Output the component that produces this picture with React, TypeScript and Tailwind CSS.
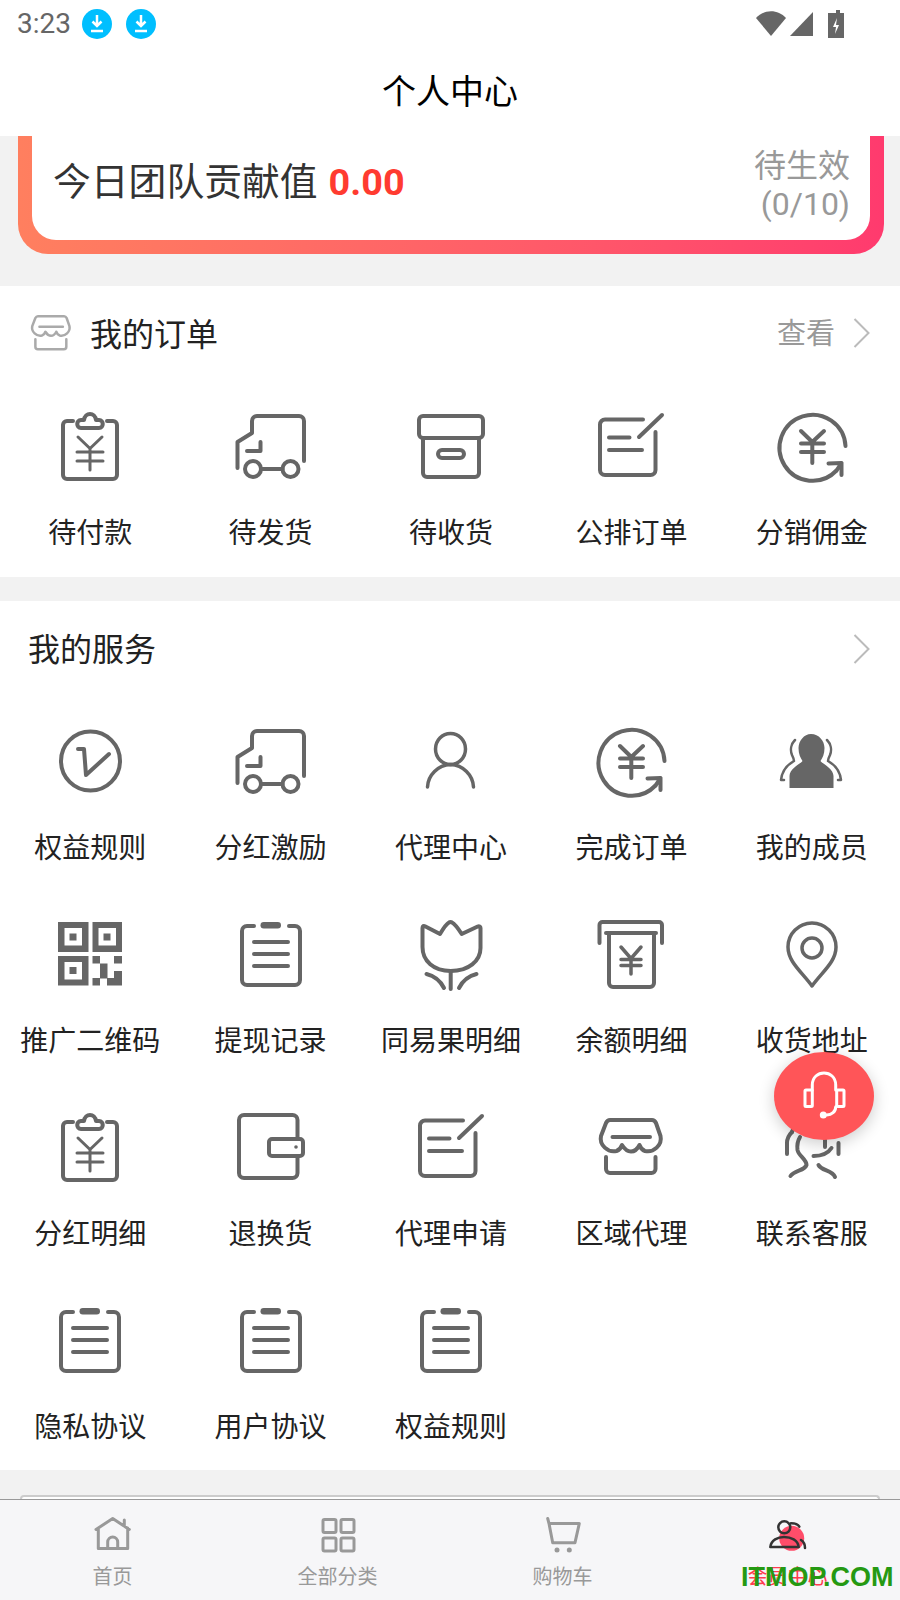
const stroke = {
  fill: "none",
  stroke: "#666",
  strokeWidth: 4,
  strokeLinecap: "round" as const,
  strokeLinejoin: "round" as const,
};

function Frame({ children }: { children: React.ReactNode }) {
  return (
    <svg width="80" height="80" viewBox="0 0 80 80" {...stroke}>
      {children}
    </svg>
  );
}

const ClipYen = () => (
  <Frame>
    <path d="M23 15h-6a4 4 0 0 0-4 4v50a4 4 0 0 0 4 4h46a4 4 0 0 0 4-4V19a4 4 0 0 0-4-4h-6" />
    <path d="M31 22h18c5 0 5-8 0-8h-3c-1-8-11-8-12 0h-3c-5 0-5 8 0 8z" />
    <path d="M28 31l12 11.500L52 31M40 42.500V64M27 46h26M27 55h26" strokeWidth="3" />
  </Frame>
);

const Truck = () => (
  <Frame>
    <path d="M73 55V15a5 5 0 0 0-5-5H26a5 5 0 0 0-5 5v12L6.500 36v26" />
    <path d="M29.500 36v9H16" />
    <circle cx="22" cy="63" r="8" />
    <circle cx="59.500" cy="63" r="8" />
    <path d="M30 63h21.500" />
  </Frame>
);

const Box = () => (
  <Frame>
    <rect x="8" y="10" width="64" height="22" rx="4" />
    <path d="M12 32v35a4 4 0 0 0 4 4h48a4 4 0 0 0 4-4V32" />
    <rect x="27" y="44" width="26" height="8" rx="4" />
  </Frame>
);

const PenNote = () => (
  <Frame>
    <path d="M52 13.500H14a5 5 0 0 0-5 5V64a5 5 0 0 0 5 5h45.500a5 5 0 0 0 5-5V26" />
    <path d="M48 31l23-22M18 31.500h20.500M18 44h33" />
  </Frame>
);

const Coin = () => (
  <Frame>
    <path d="M73.500 40A33 33 0 1 0 64.500 64.500" />
    <path d="M56.500 57.500L69.500 57v12M64.500 64.500L69.500 57" />
    <path d="M29 25l11.300 11L52 25M40.300 36v21M29 37.500h23M29 46h23" />
  </Frame>
);

const VCircle = () => (
  <Frame>
    <circle cx="40.500" cy="40" r="29.500" />
    <path d="M28 28h6l2 26L59 33" />
  </Frame>
);

const Person = () => (
  <Frame>
    <ellipse cx="39.500" cy="28" rx="15" ry="15.500" strokeWidth="3.500" />
    <path d="M16.500 66C17 54 27 44 39.500 43.500 52 44 62 54 62.500 66" strokeWidth="3.500" />
  </Frame>
);

const Members = () => (
  <Frame>
    <path
      d="M39 13c8 0 13.500 7 13.500 14 0 6-2 10-4 13 2.500 3 13 8 13 15v12H17.500V55c0-7 10.500-12 13-15-2-3-4-7-4-13 0-7 5.500-14 12.500-14z"
      fill="#666"
      stroke="none"
    />
    <path
      d="M23 19c-4 4-5 10-3 15 1 2 2 4 2 6-7 4-12 10-13 19h3M55 19c4 4 5 10 3 15-1 2-2 4-2 6 7 4 12 10 13 19h-3"
      strokeWidth="2.500"
    />
  </Frame>
);

const Qr = () => (
  <Frame>
    <g fill="#666" stroke="none">
      <path
        fillRule="evenodd"
        d="M8 8h30.500v30H8zM14.500 14v17.500H32V14zM19.500 19.500h7v7h-7zM42.500 8H72v30H42.500zM48.500 14v17.500H66V14zM53.500 19.500h7v7h-7zM8 42h30.500v29.500H8zM14.500 48v17.500H32V48zM19.500 53h7v7h-7z"
      />
      <path d="M42.500 42H50v7.500h-7.500zM64 42h8v7.500h-8zM50 49.500h7.500v7.500H50zM50 57h7.500v7.500H50zM42.500 64h7.500v7.500h-7.500zM64 57h8v7h-8zM57 64h15v7.500H57z" />
    </g>
  </Frame>
);

const ClipLines = () => (
  <Frame>
    <path d="M23 12h-7a5 5 0 0 0-5 5v49a5 5 0 0 0 5 5h48a5 5 0 0 0 5-5V17a5 5 0 0 0-5-5h-6" />
    <rect x="29.500" y="8" width="20.500" height="6.500" rx="3.250" fill="#666" stroke="none" />
    <path d="M23 28h34M23 40h34M23 52h34" />
  </Frame>
);

const Tulip = () => (
  <Frame>
    <path d="M11.500 14c0-2 1-2.500 3-1.500L29 20c3-5 6-10 9-11.500 1-.7 2-.7 3 0 3 1.500 6.500 6.500 9.700 11.500l16-7.500c1.500-.7 2.800 0 2.800 1.500v20c0 13-12 23-29.800 23-17 0-28.200-10-28.200-24z" />
    <path d="M39.700 57v18M15.500 60c8 2 14 7 17.500 14M65.500 60c-8 2-14 7-17.500 14" />
  </Frame>
);

const Bank = () => (
  <Frame>
    <path d="M8.500 29V11a3 3 0 0 1 3-3H68a3 3 0 0 1 3 3v18" />
    <path d="M15 19h50M18 19v50a4 4 0 0 0 4 4h37a4 4 0 0 0 4-4V19" />
    <path d="M30 33l10 11.500L50 33M40 44.500V60M30 45.500h20M30 51.500h20" strokeWidth="3.500" />
  </Frame>
);

const Pin = () => (
  <Frame>
    <path d="M40 72C30 58 16 48 16 33a24 24 0 0 1 48 0c0 15-14 25-24 39z" strokeWidth="3.500" />
    <circle cx="40" cy="34" r="10" strokeWidth="3.500" />
  </Frame>
);

const Wallet = () => (
  <Frame>
    <path d="M66.500 30V13a5 5 0 0 0-5-5H13a5 5 0 0 0-5 5v53a5 5 0 0 0 5 5h48.500a5 5 0 0 0 5-5V49" />
    <rect x="38" y="32" width="34" height="17" rx="3" />
    <circle cx="65" cy="40" r="1.800" fill="#666" stroke="none" />
  </Frame>
);

const StorePaths = () => (
  <>
    <path d="M19 13h42c2 0 3 1 4 3l4.500 13c2 9-7 17-15.500 15-3-1-4.500-3-5.500-6-2 4-5 6.500-8.500 6.500s-6.500-2.500-9-6.500c-1 3-2.500 5-5.500 6-8.500 2-17.500-6-15.500-15L15 16c1-2 2-3 4-3z" />
    <path d="M21.500 30h37.500M15 50v12a4 4 0 0 0 4 4h41.500a4 4 0 0 0 4-4V50" />
  </>
);

const Store = () => (
  <Frame>
    <StorePaths />
  </Frame>
);

const Agent = () => (
  <Frame>
    <path d="M20 25c-4 4-5 7-5 11v11M28 30c-3 5-3 9-2.500 13 1 6 9 9 9 15-2 6-12 5-16 11" />
    <path d="M66.500 36v11M53 33v7M41.500 49c7 0 13.500-1 18-8M46.500 58c3 6 14 5 16.500 12" />
    <path d="M20 25C24 8 56 8 60 25" />
  </Frame>
);

type Item = { label: string; icon: () => React.ReactNode };

const orders: Item[] = [
  { label: "待付款", icon: ClipYen },
  { label: "待发货", icon: Truck },
  { label: "待收货", icon: Box },
  { label: "公排订单", icon: PenNote },
  { label: "分销佣金", icon: Coin },
];

const services: Item[] = [
  { label: "权益规则", icon: VCircle },
  { label: "分红激励", icon: Truck },
  { label: "代理中心", icon: Person },
  { label: "完成订单", icon: Coin },
  { label: "我的成员", icon: Members },
  { label: "推广二维码", icon: Qr },
  { label: "提现记录", icon: ClipLines },
  { label: "同易果明细", icon: Tulip },
  { label: "余额明细", icon: Bank },
  { label: "收货地址", icon: Pin },
  { label: "分红明细", icon: ClipYen },
  { label: "退换货", icon: Wallet },
  { label: "代理申请", icon: PenNote },
  { label: "区域代理", icon: Store },
  { label: "联系客服", icon: Agent },
  { label: "隐私协议", icon: ClipLines },
  { label: "用户协议", icon: ClipLines },
  { label: "权益规则", icon: ClipLines },
];

function Cell({ item }: { item: Item }) {
  const Icon = item.icon;
  return (
    <div className="flex flex-col items-center">
      <Icon />
      <div className="mt-[28px] h-[38px] whitespace-nowrap text-[28px] leading-[40px] text-[#222]">{item.label}</div>
    </div>
  );
}

const Chevron = () => (
  <svg width="17" height="30" viewBox="0 0 17 30" fill="none" stroke="#bbb" strokeWidth="2">
    <path d="M1.500 1L15.500 15 1.500 29" />
  </svg>
);

const DownloadDot = () => (
  <div className="flex h-[30px] w-[30px] items-center justify-center rounded-full bg-[#00bfff]">
    <svg width="16" height="18" viewBox="0 0 16 18" fill="none" stroke="#fff" strokeWidth="2.500">
      <path d="M8 0v10M3.500 6.500L8 11l4.500-4.500M2 16h12" />
    </svg>
  </div>
);

function StatusBar() {
  return (
    <div className="flex h-[48px] items-center pl-[17px] pr-[56px]">
      <span className="text-[28px] text-[#666]">3:23</span>
      <div className="ml-[11px] flex gap-[14px]">
        <DownloadDot />
        <DownloadDot />
      </div>
      <svg className="ml-auto" width="88" height="28" viewBox="0 0 88 28">
        <path d="M0 8C8-1 22-1 30 8L15 26z" fill="#666" />
        <path d="M57 2v24H34z" fill="#666" />
        <path d="M76 3h4V0h4v3h4v25H72V3z" fill="#666" />
        <path d="M81 8l-4 9h3l-1 7 4-9h-3z" fill="#fff" />
      </svg>
    </div>
  );
}

function NavItem({ label, active, children }: { label: string; active?: boolean; children: React.ReactNode }) {
  return (
    <div className="flex w-[225px] flex-col items-center pt-[10px]">
      {children}
      <div className={`mt-[9px] text-[20px] leading-[28px] ${active ? "text-[#ff3b4f]" : "text-[#999]"}`}>{label}</div>
    </div>
  );
}

const navStroke = {
  fill: "none",
  stroke: "#999",
  strokeWidth: 3,
  strokeLinecap: "round" as const,
  strokeLinejoin: "round" as const,
};

export default function App() {
  return (
    <div className="relative h-[1600px] w-[900px] overflow-hidden bg-[#f2f2f2] [font-family:Roboto,'Noto_Sans_CJK_SC',sans-serif]">
      {/* top bar */}
      <div className="h-[136px] bg-white">
        <StatusBar />
        <div className="flex h-[88px] items-center justify-center text-[34px] text-black">个人中心</div>
      </div>

      {/* contribution card */}
      <div className="ml-[18px] mr-[16px] h-[118px] rounded-b-[30px] bg-gradient-to-r from-[#ff7f5f] to-[#ff3a6e] px-[14px] pb-[14px]">
        <div className="flex h-full items-center justify-between rounded-b-[24px] bg-white pb-[10px] pl-[21px] pr-[20px]">
          <div className="mb-[2px] text-[37.8px] text-[#333]">
            今日团队贡献值
            <span className="ml-[11px] font-bold text-[#ff3b30]">0.00</span>
          </div>
          <div className="mt-[3px] text-right text-[32px] leading-[38px] text-[#999]">
            <div>待生效</div>
            <div>(0/10)</div>
          </div>
        </div>
      </div>

      {/* orders */}
      <div className="mt-[32px] h-[291px] bg-white">
        <div className="flex h-[94px] items-center pl-[26px] pr-[30px]">
          <svg width="50" height="50" viewBox="0 0 80 80" {...stroke} stroke="#aaa">
            <StorePaths />
          </svg>
          <span className="ml-[14px] mt-[4px] text-[32px] text-[#222]">我的订单</span>
          <span className="ml-auto mr-[18px] mt-[4px] text-[29px] text-[#999]">查看</span>
          <Chevron />
        </div>
        <div className="mr-[-2px] grid grid-cols-5 pt-[26px]">
          {orders.map((item) => (
            <Cell key={item.label} item={item} />
          ))}
        </div>
      </div>

      {/* services */}
      <div className="mt-[24px] h-[869px] bg-white">
        <div className="flex h-[96px] items-center justify-between pl-[28px] pr-[30px]">
          <span className="mt-[2px] text-[32px] text-[#222]">我的服务</span>
          <Chevron />
        </div>
        <div className="mr-[-2px] grid grid-cols-5 gap-y-[47px] pt-[24px]">
          {services.map((item, i) => (
            <Cell key={i} item={item} />
          ))}
        </div>
      </div>

      {/* next card peeking out behind the nav */}
      <div className="h-[29px] px-[20px] pt-[25px]">
        <div className="h-[4px] rounded-t-[10px] border-2 border-b-0 border-[#ccc] bg-white" />
      </div>

      {/* bottom nav */}
      <div className="relative flex h-[101px] border-t border-[#999] bg-[#f6f6f8]">
        <NavItem label="首页">
          <svg width="60" height="44" viewBox="0 0 60 44" {...navStroke}>
            <path d="M13 19.500L29.700 8.500 46.300 19.500M41.300 10v6M15.300 18v20.500h29.400V18M24.700 38v-6a5 5 0 0 1 10 0v6" />
          </svg>
        </NavItem>
        <NavItem label="全部分类">
          <svg width="60" height="44" viewBox="0 0 60 44" {...navStroke}>
            <rect x="15" y="9.500" width="13" height="13" rx="1.500" />
            <rect x="33" y="9.500" width="13" height="13" rx="1.500" />
            <rect x="15" y="28" width="13" height="13" rx="1.500" />
            <rect x="33" y="28" width="13" height="13" rx="1.500" />
          </svg>
        </NavItem>
        <NavItem label="购物车">
          <svg width="60" height="44" viewBox="0 0 60 44" {...navStroke}>
            <path d="M14.700 8.500L16 13.500h30.300L42 32.700H19.700L16 13.500" />
            <circle cx="24" cy="40" r="2.500" fill="#999" stroke="none" />
            <circle cx="36.300" cy="40" r="2.500" fill="#999" stroke="none" />
          </svg>
        </NavItem>
        <NavItem label="会员中心" active>
          <svg width="60" height="44" viewBox="0 0 60 44" fill="none" stroke="#333" strokeWidth="2.500" strokeLinecap="round" strokeLinejoin="round">
            <circle cx="33.700" cy="28.300" r="12.500" fill="#ff4d6a" stroke="none" />
            <circle cx="26.300" cy="17.300" r="6" />
            <path d="M12.300 37c.7-7 7.700-10 13.700-10 7 0 14 3 14.700 10z" />
            <path d="M33 13.300c4 0 7 1 8.300 3.400M43 30c2.500 1.500 4 4 4 8" />
          </svg>
        </NavItem>
        {/* watermark */}
        <div className="absolute left-[741px] top-[66px] whitespace-nowrap text-[27px] font-bold leading-[22px] text-[#259912] [font-family:'Liberation_Sans',sans-serif]">
          ITMOP.COM
        </div>
      </div>

      {/* floating support button */}
      <div className="absolute left-[774px] top-[1052px] h-[88px] w-[100px] rounded-[50%] bg-[#ff5558] shadow-[0_4px_16px_rgba(0,0,0,0.2)]">
        <svg width="100" height="88" viewBox="0 0 100 88" fill="none" stroke="#fff" strokeWidth="3" strokeLinecap="round">
          <path d="M38.300 38V33c0-16 23.400-16 23.400 0v5" />
          <rect x="31" y="38" width="7.300" height="16.500" rx="1" />
          <rect x="62.700" y="38" width="7.300" height="16.500" rx="1" />
          <path d="M61.700 54.700c0 5-4 8.300-9 8.300" />
          <circle cx="49.300" cy="63" r="3.500" fill="#fff" stroke="none" />
        </svg>
      </div>
    </div>
  );
}
